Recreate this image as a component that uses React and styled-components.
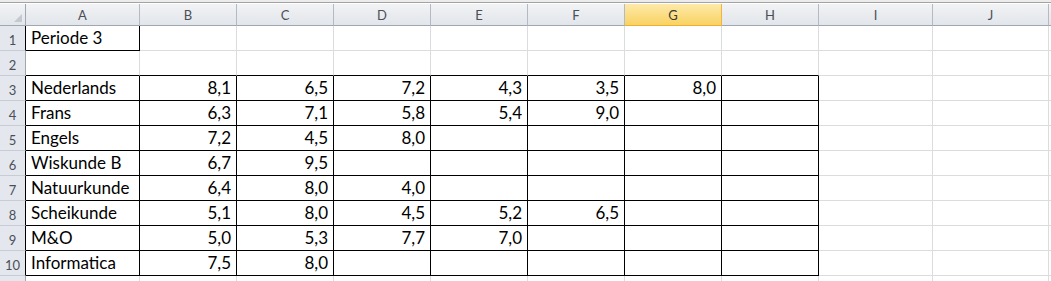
import styled, { createGlobalStyle } from "styled-components"

const GlobalStyle = createGlobalStyle`
  html, body {
    margin: 0;
    padding: 0;
    background: #ffffff;
    overflow: hidden;
  }
`

const columns = ['A', 'B', 'C', 'D', 'E', 'F', 'G', 'H', 'I', 'J', '']
const widths = [114, 97, 97, 97, 97, 97, 97, 97, 114, 116, 20]

const rows = [
  ['Periode 3'],
  [],
  ['Nederlands', '8,1', '6,5', '7,2', '4,3', '3,5', '8,0'],
  ['Frans', '6,3', '7,1', '5,8', '5,4', '9,0'],
  ['Engels', '7,2', '4,5', '8,0'],
  ['Wiskunde B', '6,7', '9,5'],
  ['Natuurkunde', '6,4', '8,0', '4,0'],
  ['Scheikunde', '5,1', '8,0', '4,5', '5,2', '6,5'],
  ['M&O', '5,0', '5,3', '7,7', '7,0'],
  ['Informatica', '7,5', '8,0'],
  [],
]

// which cells carry the black "all borders" formatting
const boxed = (r, c) => (r === 1 && c === 0) || (r >= 3 && r <= 10 && c >= 0 && c <= 7)

const TopStrip = styled.div`
  height: 2px;
  background: #ececec;
  border-bottom: 1px solid #a3a3a3;
  margin-bottom: 1px;
`

const Sheet = styled.div`
  display: grid;
  grid-template-columns: 26px ${widths.map((w) => `${w}px`).join(' ')};
  grid-template-rows: 22px repeat(11, 25px);
  font-family: Lato, "Liberation Sans", sans-serif;
`

const Corner = styled.div`
  position: relative;
  background: linear-gradient(#f1f3f5, #e2e5ea);
  border-right: 1px solid #9fa7b3;
  border-bottom: 1px solid #9fa7b3;
  &::after {
    content: '';
    position: absolute;
    right: 3px;
    bottom: 3px;
    border-left: 8px solid transparent;
    border-bottom: 8px solid #c4c9d0;
  }
`

const ColHeader = styled.div`
  display: flex;
  align-items: center;
  justify-content: center;
  font-size: 13px;
  color: ${(p) => (p.$active ? '#3a3a3a' : '#4a4f57')};
  background: ${(p) =>
    p.$active ? 'linear-gradient(#fde9a9, #f9d262)' : 'linear-gradient(#f1f3f5, #e2e5ea)'};
  border-right: 1px solid ${(p) => (p.$active ? '#f1b43c' : '#b3bac5')};
  border-bottom: 1px solid ${(p) => (p.$active ? '#efae2f' : '#9fa7b3')};
`

const RowHeader = styled.div`
  display: flex;
  align-items: center;
  justify-content: center;
  padding-top: 3px;
  font-size: 13px;
  color: #4a4f57;
  background: #e4e8ee;
  border-bottom: 1px solid #c6ccd5;
  border-right: 1px solid ${(p) => (p.$black ? '#000000' : '#9fa7b3')};
`

const Cell = styled.div`
  display: flex;
  align-items: flex-end;
  justify-content: ${(p) => (p.$number ? 'flex-end' : 'flex-start')};
  padding: 0 5px 2px 5px;
  font-size: 17px;
  line-height: 20px;
  color: #000000;
  white-space: nowrap;
  overflow: hidden;
  border-right: 1px solid ${(p) => (p.$right ? '#000000' : '#dadcdd')};
  border-bottom: 1px solid ${(p) => (p.$bottom ? '#000000' : '#dadcdd')};
`

export default function App() {
  return (
    <>
      <GlobalStyle />
      <TopStrip />
      <Sheet>
        <Corner />
        {columns.map((col, i) => (
          <ColHeader key={col + i} $active={col === 'G'}>{col}</ColHeader>
        ))}
        {rows.map((values, ri) => {
          const r = ri + 1
          return [
            <RowHeader key={'h' + r} $black={boxed(r, 0)}>{r <= 10 ? r : ''}</RowHeader>,
            ...columns.map((_, c) => (
              <Cell
                key={r + '-' + c}
                $number={c > 0}
                $right={boxed(r, c) || boxed(r, c + 1)}
                $bottom={boxed(r, c) || boxed(r + 1, c)}
              >
                {values[c] || ''}
              </Cell>
            )),
          ]
        })}
      </Sheet>
    </>
  )
}
